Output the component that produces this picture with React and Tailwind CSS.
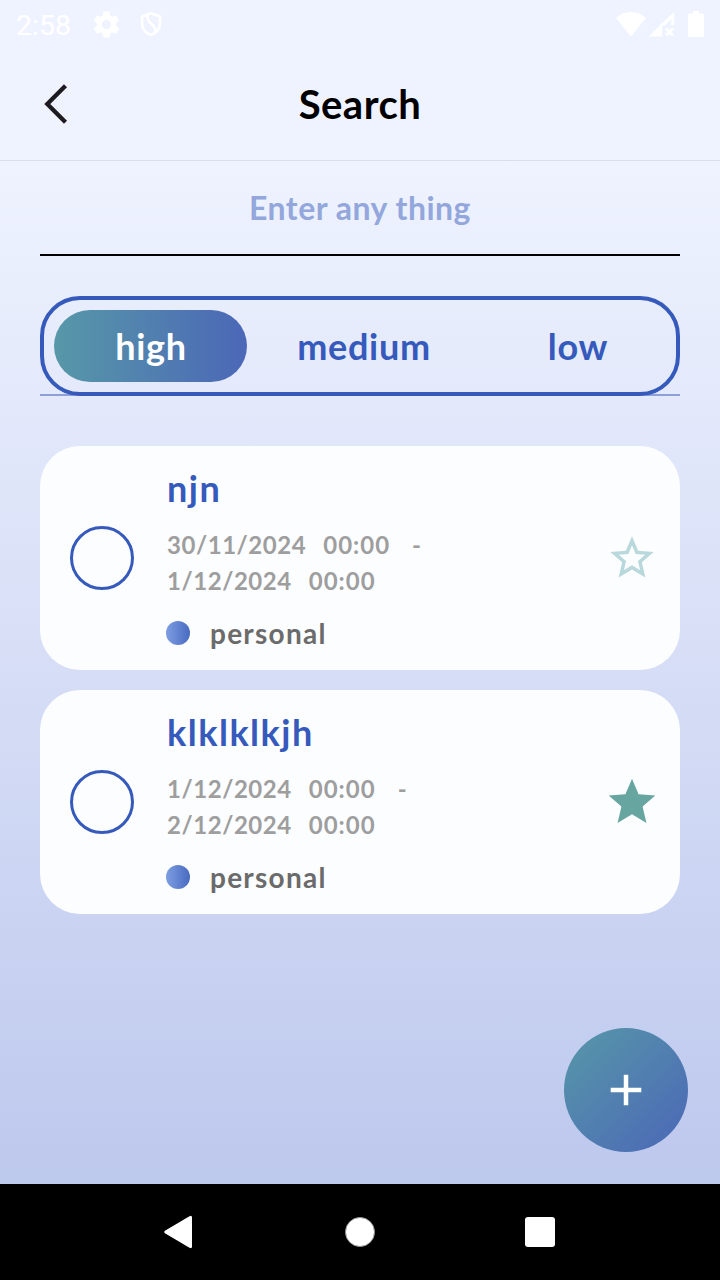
function StatusBar() {
  return (
    <div className="flex h-12 items-center px-4 font-['Roboto',sans-serif] text-white">
      <span className="w-[56px] pt-1 text-[28.5px] leading-none">2:58</span>
      <svg className="ml-[19px] size-[31px]" viewBox="0 0 24 24" fill="currentColor">
        <path d="M19.430 12.980c.04-.32.07-.64.07-.98s-.03-.66-.07-.98l2.110-1.650c.19-.15.24-.42.12-.64l-2-3.460c-.12-.22-.39-.3-.61-.22l-2.490 1c-.52-.4-1.080-.73-1.690-.98l-.38-2.650C14.460 2.180 14.250 2 14 2h-4c-.25 0-.46.18-.49.42l-.38 2.650c-.61.25-1.170.59-1.690.98l-2.490-1c-.23-.09-.49 0-.61.22l-2 3.460c-.13.22-.07.49.12.64l2.110 1.650c-.04.32-.07.65-.07.98s.03.66.07.98l-2.110 1.650c-.19.15-.24.42-.12.64l2 3.460c.12.22.39.3.61.22l2.490-1c.52.4 1.080.73 1.690.98l.38 2.650c.03.24.24.42.49.42h4c.25 0 .46-.18.49-.42l.38-2.650c.61-.25 1.170-.59 1.690-.98l2.490 1c.23.09.49 0 .61-.22l2-3.460c.12-.22.07-.49-.12-.64l-2.110-1.650zM12 15.500c-1.930 0-3.500-1.570-3.500-3.500s1.570-3.500 3.500-3.500 3.500 1.570 3.500 3.500-1.570 3.500-3.500 3.500z" />
      </svg>
      <svg className="ml-[18px] h-[26px] w-[22px]" viewBox="0 0 22 26" fill="none" stroke="currentColor" strokeWidth="2.6">
        <path d="M11 2.3 2 5.4v7.2c0 5 3.4 9.700 9 11.500 5.600-1.800 9-6.500 9-11.500V5.400Z" strokeLinejoin="round" />
        <path d="M7.200 4.500c0 4 .8 5.700 4.300 8.500 3.300 2.600 4.400 4.500 4 8" />
      </svg>
      <div className="ml-auto flex items-center">
        <svg className="mr-px h-[26px] w-8" viewBox="0 0 32 26" fill="currentColor">
          <path d="M1 7C9.500-1 22.500-1 31 7L16 25.500Z" />
        </svg>
        <svg className="h-[26px] w-[27px]" viewBox="0 0 27 26" fill="currentColor">
          <path fillRule="evenodd" d="M.500 25.500 26.300.500v13.500h-3V7.800l-5.300 5.400v1h-3.800v11.300Z" />
          <path d="m18 17.500 7 7m0-7-7 7" stroke="currentColor" strokeWidth="2.600" />
        </svg>
        <svg className="ml-[13px] h-[26px] w-4" viewBox="0 0 16 26" fill="currentColor">
          <path d="M5 0h6v2.500h3.500A1.500 1.500 0 0 1 16 4v20.500a1.500 1.500 0 0 1-1.500 1.500h-13A1.500 1.500 0 0 1 0 24.500V4a1.500 1.500 0 0 1 1.500-1.500H5Z" />
        </svg>
      </div>
    </div>
  );
}

function Header() {
  return (
    <header className="grid h-[113px] grid-cols-[120px_1fr_120px] items-center border-b border-[#d9deea]">
      <button className="ml-10 size-10" aria-label="Back">
        <svg className="size-10" viewBox="0 0 40 40" fill="none" stroke="#1d1b20" strokeWidth="4.300">
          <path d="M25.500 1.800 7.300 20l18.200 18.200" />
        </svg>
      </button>
      <h1 className="text-center text-[40px] leading-[48px] font-bold tracking-[0.5px] text-black">Search</h1>
    </header>
  );
}

function Star({ filled }) {
  return filled ? (
    <svg className="size-14 text-[#67a5a0]" viewBox="0 0 24 24" fill="currentColor">
      <path d="M12 17.270 18.180 21l-1.640-7.030L22 9.240l-7.190-.610L12 2 9.190 8.630 2 9.240l5.460 4.730L5.820 21z" />
    </svg>
  ) : (
    <svg className="size-[52px] text-[#b9d8dc]" viewBox="0 0 24 24" fill="currentColor">
      <path d="m22 9.240-7.190-.620L12 2 9.190 8.630 2 9.240l5.460 4.730L5.820 21 12 17.270 18.180 21l-1.630-7.030L22 9.240zM12 15.400l-3.760 2.270 1-4.280-3.320-2.880 4.380-.380L12 6.100l1.710 4.040 4.380.380-3.320 2.880 1 4.280L12 15.400z" />
    </svg>
  );
}

function TaskCard({ title, start, end, category, starred }) {
  return (
    <article className="flex h-56 items-center rounded-[40px] bg-[#fcfdff] pl-[30px]">
      <button className="size-16 shrink-0 rounded-full border-[3px] border-[#355abc]" aria-label="Complete" />
      <div className="ml-8 h-full flex-1 pt-5">
        <h2 className="pl-px text-[36px] leading-[44px] font-bold tracking-[1.5px] text-[#355abc]">{title}</h2>
        <div className="mt-[17px] pl-px text-[24px] leading-9 font-bold tracking-[1px] text-[#9e9e9e]">
          <p className="flex">
            <span className="tracking-[0.55px]">{start[0]}</span>
            <span className="ml-[17px]">{start[1]}</span>
            <span className="ml-[22px]">-</span>
          </p>
          <p className="flex">
            <span className="tracking-[0.55px]">{end[0]}</span>
            <span className="ml-[17px]">{end[1]}</span>
          </p>
        </div>
        <div className="mt-4 flex items-center">
          <span className="size-6 rounded-full bg-linear-to-r/srgb from-[#7e9ee2] to-[#486ac0]" />
          <span className="ml-5 text-[28px] leading-9 font-bold tracking-[1.25px] text-[#6b6b6b]">{category}</span>
        </div>
      </div>
      <div className="flex w-24 shrink-0 justify-center">
        <Star filled={starred} />
      </div>
    </article>
  );
}

function NavBar() {
  return (
    <nav className="grid h-24 grid-cols-[90px_180px_180px_180px_90px] items-center justify-items-center bg-black text-white">
      <svg className="col-start-2 mr-1 h-[34px] w-8" viewBox="0 0 32 34" fill="currentColor">
        <path d="M27.500 1.200q2.500-1.200 2.500 1.300v29q0 2.500-2.500 1.300L2.900 18.200q-1.700-1.200 0-2.400Z" />
      </svg>
      <span className="size-[30px] rounded-full border border-[#999999] bg-white" />
      <span className="size-[30px] rounded-[3px] bg-white" />
    </nav>
  );
}

const tasks = [
  { title: "njn", start: ["30/11/2024", "00:00"], end: ["1/12/2024", "00:00"], category: "personal", starred: false },
  { title: "klklklkjh", start: ["1/12/2024", "00:00"], end: ["2/12/2024", "00:00"], category: "personal", starred: true },
];

export default function App() {
  return (
    <div className="flex h-[1280px] w-[720px] flex-col overflow-hidden bg-[#eff3ff] font-['Lato',sans-serif]">
      <StatusBar />
      <Header />
      <main className="flex flex-1 flex-col bg-linear-to-b/srgb from-[#eff3ff] to-[#bdc8ed] px-10">
        <div className="flex h-[95px] items-center justify-center border-b-2 border-black text-[32px] font-bold tracking-[0.5px] text-[#93a7dc]">
          Enter any thing
        </div>
        <div className="mt-10 h-[100px] border-b-2 border-[#8da1d9]">
          <div className="grid h-[100px] grid-cols-[193px_193px_193px] items-center gap-5 rounded-[40px] border-4 border-[#355abc] pl-[10px] text-center text-[36px] font-bold tracking-[0.7px] text-[#355abc]">
            <button className="h-[72px] rounded-full bg-linear-to-r/srgb from-[#5798a8] to-[#4b67b7] pl-px text-white">high</button>
            <button className="pl-px">medium</button>
            <button className="pl-[3px]">low</button>
          </div>
        </div>
        <section className="mt-[50px] flex flex-col gap-5">
          {tasks.map((task) => (
            <TaskCard key={task.title} {...task} />
          ))}
        </section>
        <button className="mt-auto mr-[-8px] mb-8 flex size-[124px] items-center justify-center self-end rounded-full bg-linear-to-br/srgb from-[#5798a8] to-[#4b67b7]" aria-label="Add">
          <svg className="size-8" viewBox="0 0 32 32" stroke="white" strokeWidth="4.500">
            <path d="M16 .7v30.600M.7 16h30.600" />
          </svg>
        </button>
      </main>
      <NavBar />
    </div>
  );
}
